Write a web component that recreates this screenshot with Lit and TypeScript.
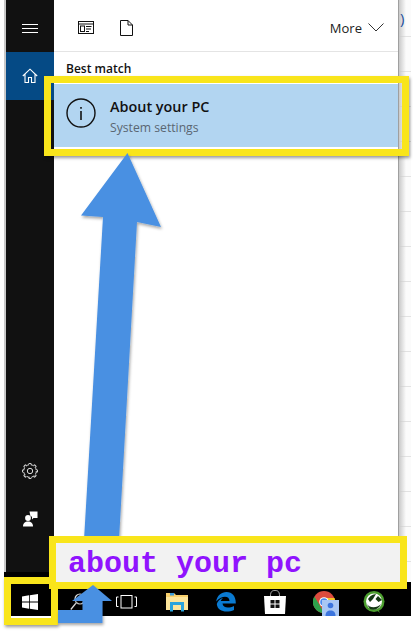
import { LitElement, html, css, svg } from "lit";
import { customElement } from "lit/decorators.js";

@customElement("app-root")
export class AppRoot extends LitElement {
  static styles = css`
    :host { display: block; position: relative; width: 413px; height: 631px; overflow: hidden; background: #fff; font-family: "Open Sans", "Noto Sans", sans-serif; color: #111; }
    .top { display: flex; height: 572px; }
    .edge { width: 4px; background: #fff; }
    .edge2 { width: 2px; background: #c8c8c8; }
    .side { width: 48px; background: #111; display: flex; flex-direction: column; align-items: center; }
    .ham { height: 52px; padding-top: 4px; box-sizing: border-box; display: flex; align-items: center; justify-content: center; width: 100%; }
    .home { height: 48px; width: 100%; background: #054a85; display: flex; align-items: center; justify-content: center; box-sizing: border-box; }
    .grow { flex: 1; }
    .gear { margin-bottom: 31px; display: flex; }
    .fb { margin-bottom: 45px; display: flex; }
    .main { width: 344px; background: #fff; display: flex; flex-direction: column; }
    .tabs { height: 47px; padding: 4px 14px 0 24px; border-bottom: 1px solid #e4e4e4; display: flex; align-items: center; gap: 26px; }
    .more { margin-left: auto; display: flex; align-items: center; gap: 6px; font-size: 13px; color: #222; }
    .label { font-size: 12px; font-weight: 600; margin: 8px 0 0 12px; line-height: 17px; height: 24px; }
    .row { height: 63px; background: #b2d5f1; display: flex; align-items: center; padding-left: 12px; gap: 14px; }
    .info { display: flex; margin-bottom: 5px; }
    .row-text { display: flex; flex-direction: column; margin-top: 3px; }
    .t1 { font-size: 14.4px; font-weight: 600; line-height: 21px; color: #111; }
    .t2 { font-size: 12.2px; line-height: 21px; color: #5a6672; }
    .right { width: 13px; height: 582px; flex: none; align-self: flex-start; position: relative; z-index: 1; border-left: 1px solid #9f9f9f; box-sizing: border-box; background: linear-gradient(90deg, #c9c9c9, rgba(255,255,255,0) 7px), repeating-linear-gradient(#fbfbfb 0 34px, #e2e2e2 34px 35px) 0 2px; color: #1c4f9c; font-size: 15px; }
    .paren { position: absolute; left: 1px; top: 8px; line-height: 20px; }
    .bar { margin-left: 4px; width: 407px; height: 44px; background: #000; position: relative; }
    .ic { position: absolute; top: 16px; height: 28px; display: flex; align-items: center; }
    .ic-win { left: 18px; }
    .ic-search { left: 66px; }
    .ic-view { left: 112px; }
    .ic-folder { left: 162px; }
    .ic-edge { left: 212px; }
    .ic-store { left: 260px; }
    .ic-chrome { left: 309px; align-items: flex-end; }
    .ic-green { left: 359px; }
    .box { position: absolute; z-index: 2; box-sizing: border-box; border: 7px solid #f9e51b; box-shadow: 1px 2px 3px rgba(0,0,0,.4); }
    .box1 { left: 44px; top: 76px; width: 365px; height: 80px; }
    .box2 { left: 49px; top: 536px; width: 358px; height: 53px; background: #f2f2f2; display: flex; align-items: center; padding: 2px 0 0 12px; box-shadow: none; font: bold 30px "Liberation Mono", monospace; color: #9013fe; white-space: pre; }
    .box3 { left: 4px; top: 577px; width: 54px; height: 48px; }
    .over { position: absolute; z-index: 2; left: 0; top: 0; pointer-events: none; }
  `;

  private home() {
    return html`<svg width="16" height="16" viewBox="0 0 16 16" fill="none" stroke="#fff" stroke-width="1.1"><path d="M.8 8 8 1.2 15.2 8M3 6.2V14.5H6.5V9.500H9.500V14.500H13V6.200"/></svg>`;
  }
  private gear() {
    const teeth = [];
    for (let i = 0; i < 8; i++) teeth.push(svg`<path transform="rotate(${i * 45} 8 8)" d="M6.600 1.600 7 .4H9L9.400 1.600"/>`);
    return html`<svg width="16" height="16" viewBox="0 0 16 16" fill="none" stroke="#ddd" stroke-width="1"><circle cx="8" cy="8" r="2.700"/><circle cx="8" cy="8" r="6.300" stroke-dasharray="3 1.950"/>${teeth}</svg>`;
  }
  private build() {
    return html`<svg width="15" height="17" viewBox="0 0 15 17" fill="#fff"><circle cx="5" cy="8" r="2.900"/><path d="M0 16.500C0 13 2 11.500 5 11.500S10 13 10 16.500Z"/><path d="M6.500 1.500H14.500V8H10.500L9 9.500V6.500H7.500Z"/></svg>`;
  }
  private news() {
    return html`<svg width="16" height="14" viewBox="0 0 16 14" fill="none" stroke="#111" stroke-width="1"><rect x=".5" y=".5" width="15" height="12"/><path d="M.5 3H15.500"/><rect x="2.500" y="5" width="4" height="5.500"/><path d="M8 5.500H13.500M8 8H13M8 10.500H11"/></svg>`;
  }
  private doc() {
    return html`<svg width="13" height="16" viewBox="0 0 13 16" fill="none" stroke="#111" stroke-width="1"><path d="M.5.5H8L12.500 5V15.500H.5ZM8 .5V5H12.500"/></svg>`;
  }
  private chev() {
    return html`<svg width="16" height="9" viewBox="0 0 16 9" fill="none" stroke="#333" stroke-width="1"><path d="M.5.5 8 8 15.500.5"/></svg>`;
  }
  private info() {
    return html`<svg width="30" height="30" viewBox="0 0 30 30" fill="none" stroke="#111" stroke-width="1.400"><circle cx="15" cy="15" r="14"/><path d="M15 13V22" stroke-width="1.600"/><path d="M15 9V10.700" stroke-width="1.600"/></svg>`;
  }
  private taskbar() {
    return html`
      <div class="ic ic-win"><svg width="16" height="16" viewBox="0 0 16 16" fill="#fff"><path d="M0 2.400 7 1.300V7.600H0ZM7.800 1.200 16 0V7.600H7.800ZM0 8.400H7V14.700L0 13.600ZM7.800 8.400H16V16L7.800 14.800Z"/></svg></div>
      <div class="ic ic-search"><svg width="16" height="18" viewBox="0 0 16 18" fill="none" stroke="#ddd" stroke-width="1.200"><circle cx="10" cy="6" r="5"/><path d="M6.500 9.500.8 16.500"/></svg></div>
      <div class="ic ic-view"><svg width="21" height="14" viewBox="0 0 21 14" fill="none" stroke="#fff" stroke-width="1"><rect x="5" y=".5" width="11" height="12.500"/><path d="M2.500 2H.5V11.500H2.500M18.500 2H20.500V11.500H18.500"/></svg></div>
      <div class="ic ic-folder"><svg width="22" height="20" viewBox="0 0 22 20"><path d="M0 1H8L10 3H22V18H0Z" fill="#f7cf6b"/><rect x="0" y="5" width="22" height="13" fill="#fce59b"/><path d="M4 1H8V3.500H4Z" fill="#3b9cd9"/><path d="M4 10H18V19.500H15V13H7V19.500H4Z" fill="#2aa4dc"/></svg></div>
      <div class="ic ic-edge"><svg width="20" height="20" viewBox="0 0 20 20"><path d="M.2 9.500C1 3.500 5.500 0 10.500 0 16.500 0 20 4.500 19.800 11.500H6.500C6.800 15.800 12.500 16.800 18 14V18C11 21 1.500 20 .8 12 1.500 9 4 6.800 7 6 5.500 7.500 5 8.200 4.800 9H13.500C13.500 4 6.500 2.800 .2 9.500Z" fill="#0a7ad1"/></svg></div>
      <div class="ic ic-store"><svg width="22" height="25" viewBox="0 0 22 25"><path d="M6.500 6C6.500 1 8.500 .5 11 .5S15.500 1 15.500 6" fill="none" stroke="#aaa" stroke-width="1"/><path d="M0 6H22L21 24H1Z" fill="#fff"/><path d="M6.500 10H10.500V13.500H6.500ZM11.500 10H15.500V13.500H11.500ZM6.500 14.500H10.500V18H6.500ZM11.500 14.500H15.500V18H11.500Z" fill="#111"/></svg></div>
      <div class="ic ic-chrome"><svg width="26" height="25" viewBox="0 0 26 25"><circle cx="11" cy="11" r="11" fill="#dd4b3e"/><path d="M11 22A11 11 0 0 1 1.400 5.500L6 13 11 22Z" fill="#2ea24d"/><path d="M11 22 16 13 11 7H21.500A11 11 0 0 1 11 22Z" fill="#f6c624"/><circle cx="11" cy="11" r="4.800" fill="#fff"/><circle cx="11" cy="11" r="3.800" fill="#4a8af0"/><rect x="9" y="9" width="17" height="16" fill="#a9c7f4"/><circle cx="17.500" cy="14.500" r="2.800" fill="#3b74de"/><path d="M12.500 25C12.500 21 14.500 19.500 17.500 19.500S22.500 21 22.500 25Z" fill="#3b74de"/></svg></div>
      <div class="ic ic-green"><svg width="22" height="22" viewBox="0 0 22 22"><circle cx="11" cy="10.500" r="10.500" fill="#4c9e2f"/><circle cx="11" cy="10.500" r="8" fill="#fff"/><path d="M5 8C8 4 10 3.500 13 3L10 8 7 11ZM15 5 19 9 15.500 11 12.500 8ZM3 12C6 17 13 18 18 13 16 18 11 20 7 18Z" fill="#143814"/><path d="M14 19.500 17 22 15 18Z" fill="#4c9e2f"/></svg></div>
    `;
  }

  render() {
    return html`
      <div class="top">
        <div class="edge"></div><div class="edge2"></div>
        <div class="side">
          <div class="ham"><svg width="16" height="9" viewBox="0 0 16 9" stroke="#fff" stroke-width="1"><path d="M0 .5H16M0 4.500H16M0 8.500H16"/></svg></div>
          <div class="home">${this.home()}</div>
          <div class="grow"></div>
          <div class="gear">${this.gear()}</div>
          <div class="fb">${this.build()}</div>
        </div>
        <div class="main">
          <div class="tabs">
            ${this.news()}${this.doc()}
            <div class="more"><span>More</span>${this.chev()}</div>
          </div>
          <div class="label">Best match</div>
          <div class="row">
            <div class="info">${this.info()}</div>
            <div class="row-text"><div class="t1">About your PC</div><div class="t2">System settings</div></div>
          </div>
        </div>
        <div class="right"><span class="paren">)</span></div>
      </div>
      <div class="bar">${this.taskbar()}</div>
      <div class="box box1"></div>
      <svg class="over" width="413" height="631" viewBox="0 0 413 631">
        <defs><filter id="s" x="-20%" y="-20%" width="140%" height="140%"><feDropShadow dx="1" dy="2" stdDeviation="1.500" flood-color="#000" flood-opacity=".35"/></filter></defs>
        <path filter="url(#s)" fill="#4a90e2" d="M127.500 153 161 227 137 222 119 540H84L103 217 81 215.500Z"/>
      </svg>
      <div class="box box3"></div>
      <div class="box box2">about your pc</div>
      <svg class="over" width="413" height="631" viewBox="0 0 413 631">
        <defs><filter id="s2" x="-20%" y="-20%" width="140%" height="140%"><feDropShadow dx="1" dy="2" stdDeviation="1.500" flood-color="#000" flood-opacity=".35"/></filter></defs>
        <path filter="url(#s2)" fill="#4a90e2" d="M93 585 112 601H102.500V623H58V610H82.500V601H72Z"/>
      </svg>
    `;
  }
}
